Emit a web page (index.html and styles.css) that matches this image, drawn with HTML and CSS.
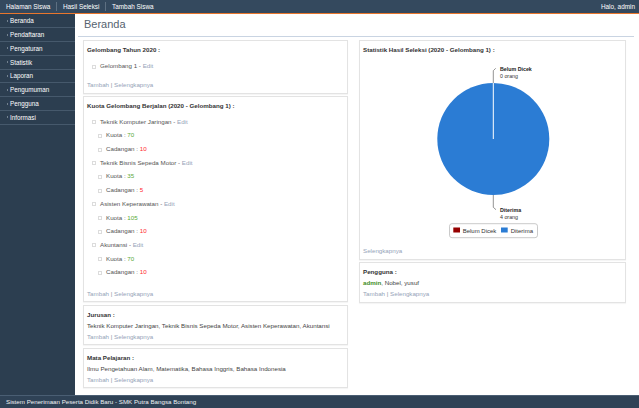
FILE: index.html
```html
<!DOCTYPE html>
<html lang="id">
<head>
<meta charset="utf-8">
<title>Beranda</title>
<link rel="stylesheet" href="styles.css">
</head>
<body>
<header class="topbar">
  <nav class="topnav">
    <a class="topnav-item">Halaman Siswa</a>
    <a class="topnav-item">Hasil Seleksi</a>
    <a class="topnav-item">Tambah Siswa</a>
  </nav>
  <div class="greeting">Halo, admin</div>
</header>
<div class="layout">
  <aside class="sidebar">
    <ul class="side-menu">
      <li class="side-item">Beranda</li>
      <li class="side-item">Pendaftaran</li>
      <li class="side-item">Pengaturan</li>
      <li class="side-item">Statistik</li>
      <li class="side-item">Laporan</li>
      <li class="side-item">Pengumuman</li>
      <li class="side-item">Pengguna</li>
      <li class="side-item">Informasi</li>
    </ul>
  </aside>
  <main class="main">
    <h1 class="page-title">Beranda</h1>
    <div class="columns">
      <div class="col">
        <section class="panel">
          <h2 class="panel-title">Gelombang Tahun 2020 :</h2>
          <ul class="tree">
            <li><span class="bullet"></span>Gelombang 1 - <a class="link">Edit</a></li>
          </ul>
          <p class="links"><a class="link">Tambah</a> | <a class="link">Selengkapnya</a></p>
        </section>
        <section class="panel">
          <h2 class="panel-title">Kuota Gelombang Berjalan (2020 - Gelombang 1) :</h2>
          <ul class="tree tree-wide">
            <li><span class="bullet"></span>Teknik Komputer Jaringan - <a class="link">Edit</a>
              <ul class="tree sub">
                <li><span class="bullet"></span>Kuota : <span class="val-green">70</span></li>
                <li><span class="bullet"></span>Cadangan : <span class="val-red">10</span></li>
              </ul>
            </li>
            <li><span class="bullet"></span>Teknik Bisnis Sepeda Motor - <a class="link">Edit</a>
              <ul class="tree sub">
                <li><span class="bullet"></span>Kuota : <span class="val-green">35</span></li>
                <li><span class="bullet"></span>Cadangan : <span class="val-red">5</span></li>
              </ul>
            </li>
            <li><span class="bullet"></span>Asisten Keperawatan - <a class="link">Edit</a>
              <ul class="tree sub">
                <li><span class="bullet"></span>Kuota : <span class="val-green">105</span></li>
                <li><span class="bullet"></span>Cadangan : <span class="val-red">10</span></li>
              </ul>
            </li>
            <li><span class="bullet"></span>Akuntansi - <a class="link">Edit</a>
              <ul class="tree sub">
                <li><span class="bullet"></span>Kuota : <span class="val-green">70</span></li>
                <li><span class="bullet"></span>Cadangan : <span class="val-red">10</span></li>
              </ul>
            </li>
          </ul>
          <p class="links"><a class="link">Tambah</a> | <a class="link">Selengkapnya</a></p>
        </section>
        <section class="panel">
          <h2 class="panel-title">Jurusan :</h2>
          <p class="text">Teknik Komputer Jaringan, Teknik Bisnis Sepeda Motor, Asisten Keperawatan, Akuntansi</p>
          <p class="links"><a class="link">Tambah</a> | <a class="link">Selengkapnya</a></p>
        </section>
        <section class="panel">
          <h2 class="panel-title">Mata Pelajaran :</h2>
          <p class="text">Ilmu Pengetahuan Alam, Matematika, Bahasa Inggris, Bahasa Indonesia</p>
          <p class="links"><a class="link">Tambah</a> | <a class="link">Selengkapnya</a></p>
        </section>
      </div>
      <div class="col">
        <section class="panel">
          <h2 class="panel-title">Statistik Hasil Seleksi (2020 - Gelombang 1) :</h2>
          <svg class="chart" width="259" height="190" viewBox="0 0 259 190">
            <circle cx="130.3" cy="84" r="56" fill="#2b7cd4"/>
            <line x1="130.3" y1="84" x2="130.3" y2="28" stroke="#fff" stroke-width="1"/>
            <path d="M130.3 28 V15.7 L132.7 13.3" fill="none" stroke="#666" stroke-width="0.7"/>
            <text x="137" y="16.2" class="lbl-b">Belum Dicek</text>
            <text x="137" y="22.8" class="lbl">0 orang</text>
            <path d="M130.3 140 V152.3 L133 154.7" fill="none" stroke="#666" stroke-width="0.7"/>
            <text x="137" y="157.2" class="lbl-b">Diterima</text>
            <text x="137" y="163.8" class="lbl">4 orang</text>
            <rect x="86.5" y="168.7" width="88" height="14" rx="2.5" fill="#fff" stroke="#bdbdbd" stroke-width="0.8"/>
            <rect x="90.3" y="172.5" width="6.7" height="5" fill="#960000"/>
            <text x="99.7" y="177.6" class="lgd">Belum Dicek</text>
            <rect x="138" y="172.5" width="6.7" height="5" fill="#2b7cd4"/>
            <text x="147.7" y="177.6" class="lgd">Diterima</text>
          </svg>
          <p class="links"><a class="link">Selengkapnya</a></p>
        </section>
        <section class="panel">
          <h2 class="panel-title">Pengguna :</h2>
          <p class="text"><b class="user-admin">admin</b>, Nobel, yusuf</p>
          <p class="links"><a class="link">Tambah</a> | <a class="link">Selengkapnya</a></p>
        </section>
      </div>
    </div>
  </main>
</div>
<footer class="footer">Sistem Penerimaan Peserta Didik Baru - SMK Putra Bangsa Bontang</footer>
</body>
</html>
```
FILE: styles.css
```css
* { box-sizing: border-box; }
html, body { margin: 0; padding: 0; }
body {
  width: 639px;
  height: 408px;
  overflow: hidden;
  font-family: "Liberation Sans", Arial, sans-serif;
  font-size: 6.2px;
  color: #444;
  background: #fff;
  display: flex;
  flex-direction: column;
}
a { text-decoration: none; }

.topbar {
  flex: none;
  height: 14.4px;
  background: #34495e;
  border-bottom: 1.4px solid #e8762d;
  display: flex;
  justify-content: space-between;
  align-items: center;
  padding-right: 4px;
  color: #fff;
  font-size: 6.4px;
}
.topnav { display: flex; align-items: center; }
.topnav-item {
  color: #fff;
  padding: 0 5.5px 0 6px;
  line-height: 9px;
  border-left: 1px solid #5e7082;
}
.topnav-item:first-child { border-left: none; }

.layout { flex: 1; display: flex; min-height: 0; }

.sidebar { flex: none; width: 75px; background: #2c3e50; }
.side-menu { list-style: none; margin: 0; padding: 0; }
.side-item {
  height: 13.8px;
  border-bottom: 1px solid #46596c;
  color: #fff;
  padding-left: 7px;
  display: flex;
  align-items: center;
  gap: 2px;
  font-size: 6.3px;
}
.side-item::before {
  content: "";
  border-left: 1.6px solid #b9c3cd;
  border-top: 1.5px solid transparent;
  border-bottom: 1.5px solid transparent;
}

.main { flex: 1; padding: 0 5px 0 3px; }
.page-title {
  margin: 0;
  padding-left: 6px;
  font-size: 11px;
  font-weight: normal;
  line-height: 21.5px;
  color: #56636f;
  border-bottom: 1px solid #c9d4e2;
}
.columns {
  display: grid;
  grid-template-columns: 265px 267px;
  column-gap: 11px;
  align-items: start;
  margin: 3.5px 0 0 5px;
}
.panel {
  border: 1px solid #e3e3e3;
  padding: 3px 3px 2.5px;
  margin-bottom: 2.5px;
  box-shadow: 0 1px 1px rgba(0, 0, 0, 0.04);
}
.panel-title {
  margin: 0;
  font-size: 6.2px;
  font-weight: bold;
  line-height: 11px;
  color: #333;
}
.text { margin: 0; line-height: 11px; color: #444; }
.links { margin: 0; line-height: 11px; color: #8a8f96; }
.link { color: #95a3b8; }

.tree {
  list-style: none;
  margin: 4px 0 6px;
  padding: 0 0 0 5px;
  line-height: 13.7px;
  color: #555;
}
.tree-wide { margin: 3.5px 0 8.5px; }
.tree .sub { margin: 0; padding-left: 6px; }
.bullet {
  display: inline-block;
  width: 4px;
  height: 4px;
  border: 1px solid #dcdcdc;
  margin-right: 4px;
  vertical-align: -0.5px;
}
.val-green { color: #5aaa38; }
.val-red { color: #ff2a2a; }
.user-admin { color: #3d8d1c; }

.chart { display: block; }
.lbl-b { font-family: "Liberation Sans", Arial, sans-serif; font-size: 5.3px; font-weight: bold; fill: #222; }
.lbl { font-family: "Liberation Sans", Arial, sans-serif; font-size: 5.3px; fill: #333; }
.lgd { font-family: "Liberation Sans", Arial, sans-serif; font-size: 6px; fill: #333; }

.footer {
  flex: none;
  height: 12.7px;
  background: #2f4256;
  border-top: 1px solid #4a5e73;
  color: #eef1f4;
  padding-left: 6px;
  line-height: 11.7px;
  font-size: 6.2px;
}
```
